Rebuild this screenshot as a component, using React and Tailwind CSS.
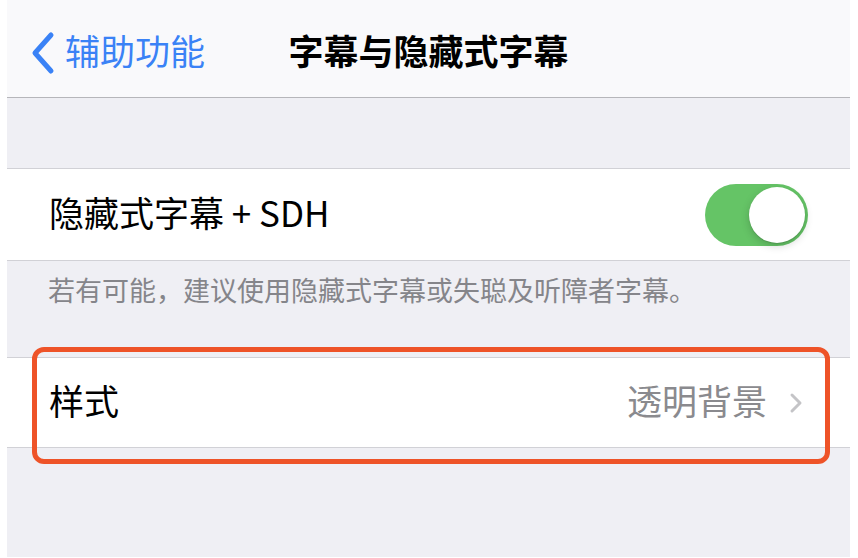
import React from 'react';

const fontStack = { fontFamily: '"Noto Sans CJK SC", "Noto Sans", sans-serif' };

function BackChevron() {
  return (
    <svg width="26" height="44" viewBox="0 0 26 44" fill="none">
      <path d="M21 4 L5 22 L21 40" stroke="#3a82f6" strokeWidth="5" strokeLinecap="round" strokeLinejoin="round" />
    </svg>
  );
}

function RowChevron() {
  return (
    <svg width="14" height="22" viewBox="0 0 14 22" fill="none">
      <path d="M3 3 L11 11 L3 19" stroke="#c4c4c7" strokeWidth="3" strokeLinecap="round" strokeLinejoin="round" />
    </svg>
  );
}

function Toggle() {
  return (
    <div className="flex h-[62px] w-[103px] items-center justify-end rounded-full bg-[#65c466] px-[3px]">
      <div className="h-[56px] w-[56px] rounded-full bg-white shadow-[0_3px_8px_rgba(0,0,0,0.18),0_1px_1px_rgba(0,0,0,0.12)]" />
    </div>
  );
}

function App() {
  return (
    <div className="h-[558px] w-[858px] bg-white pl-[7px] pr-[8px]" style={fontStack}>
      <div className="flex h-[557px] flex-col bg-[#efeff4]">
        <header className="grid h-[98px] grid-cols-[1fr_auto_1fr] items-center border-b border-[#b6b6ba] bg-[#f9f9fb] pt-[8px]">
          <div className="flex items-center gap-[9px] pl-[23px] text-[35px] leading-none text-[#3a82f6]">
            <BackChevron />
            <span className="pb-[7px]">辅助功能</span>
          </div>
          <h1 className="pb-[7px] text-[35px] font-semibold leading-none text-black">字幕与隐藏式字幕</h1>
          <div />
        </header>

        <div className="h-[70px]" />

        <section className="flex h-[93px] items-center justify-between border-y border-[#d1d1d6] bg-white pl-[42px] pr-[42px]">
          <span className="pb-[6px] text-[35px] leading-none text-black">隐藏式字幕 + SDH</span>
          <Toggle />
        </section>

        <div className="h-[96px] pl-[41px] pt-[11px]">
          <p className="text-[27px] leading-[36px] text-[#85858a]">若有可能，建议使用隐藏式字幕或失聪及听障者字幕。</p>
        </div>

        <section className="relative flex h-[91px] items-center justify-between border-y border-[#d1d1d6] bg-white pl-[42px] pr-[47px]">
          <span className="pb-[6px] text-[35px] leading-none text-black">样式</span>
          <div className="flex items-center gap-[22px]">
            <span className="pb-[6px] text-[35px] leading-none text-[#8a8a8e]">透明背景</span>
            <RowChevron />
          </div>
          <div className="absolute left-[25px] top-[-11px] h-[117px] w-[798px] rounded-[12px] border-[5px] border-[#ee5328]" />
        </section>
      </div>
    </div>
  );
}

export default App;
